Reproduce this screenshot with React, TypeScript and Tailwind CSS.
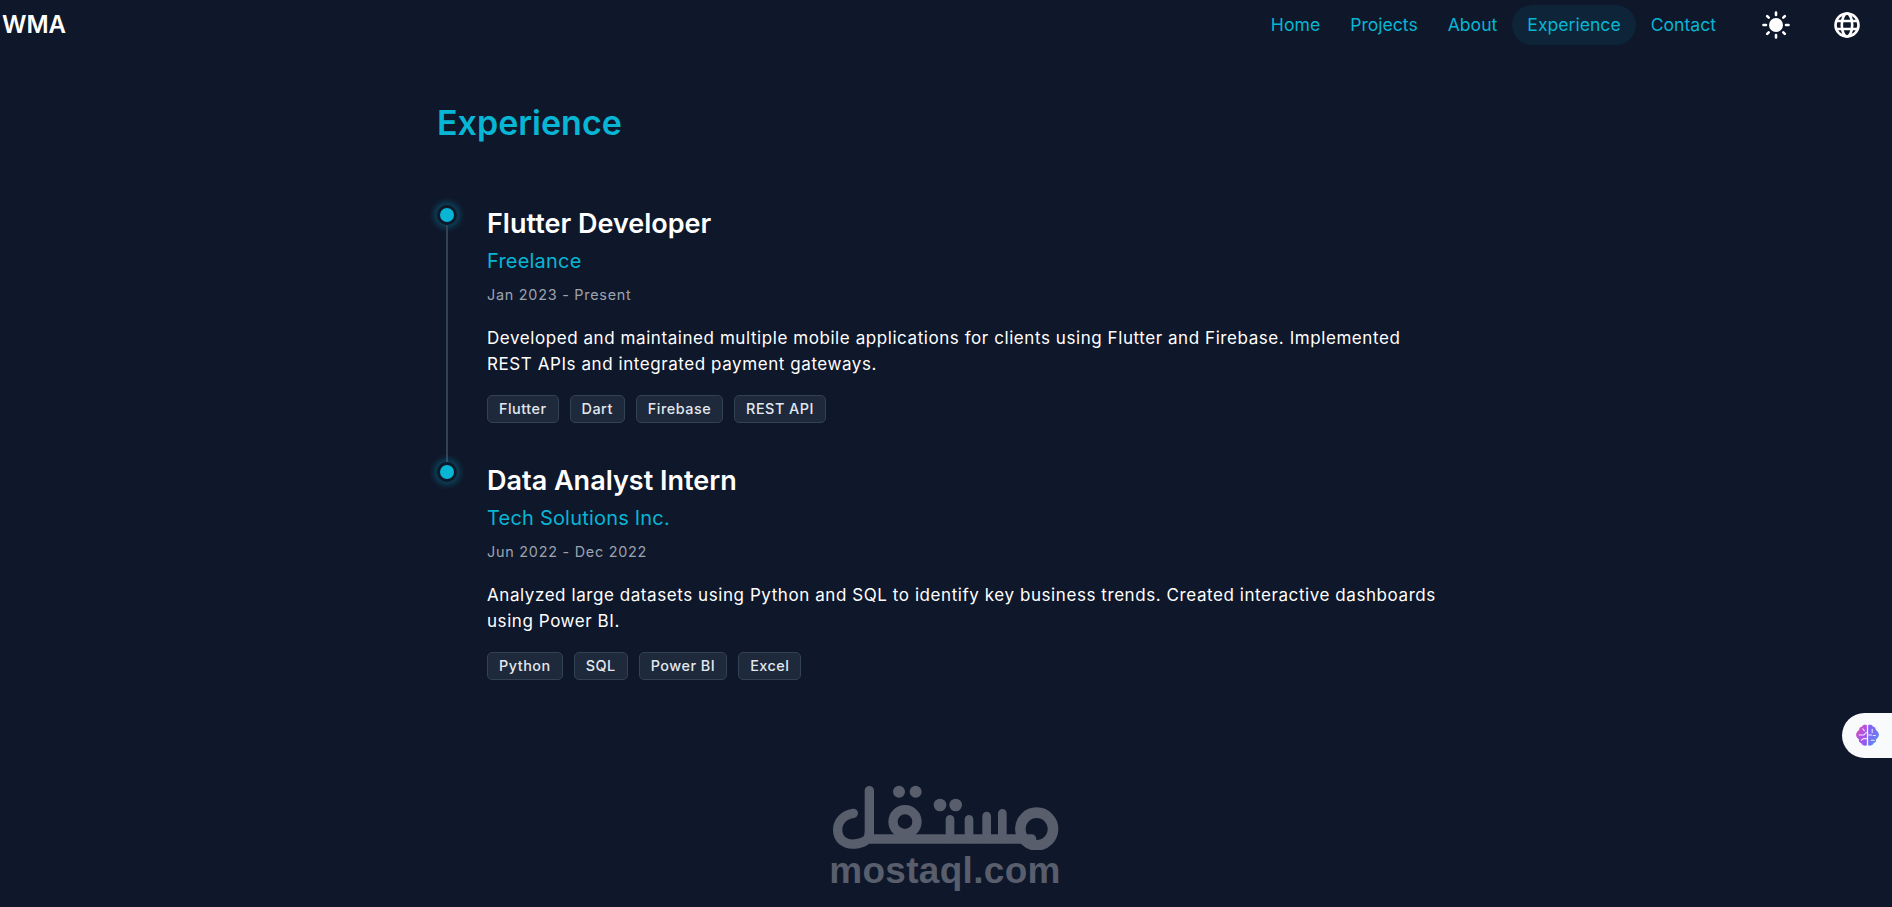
import React from "react";

const jobs = [
  {
    title: "Flutter Developer",
    company: "Freelance",
    date: "Jan 2023 - Present",
    desc: "Developed and maintained multiple mobile applications for clients using Flutter and Firebase. Implemented REST APIs and integrated payment gateways.",
    tags: ["Flutter", "Dart", "Firebase", "REST API"],
  },
  {
    title: "Data Analyst Intern",
    company: "Tech Solutions Inc.",
    date: "Jun 2022 - Dec 2022",
    desc: "Analyzed large datasets using Python and SQL to identify key business trends. Created interactive dashboards using Power BI.",
    tags: ["Python", "SQL", "Power BI", "Excel"],
  },
];

function Sun() {
  return (
    <svg width="30" height="30" viewBox="0 0 30 30" fill="none" stroke="white" strokeWidth="2.6" strokeLinecap="round">
      <circle cx="15" cy="15" r="7" fill="white" stroke="none" />
      <path d="M15 2.5v2.5M15 25v2.5M2.5 15H5M25 15h2.5M6.2 6.2l1.5 1.5M22.3 22.3l1.5 1.5M6.2 23.8l1.5-1.5M22.3 7.7l1.5-1.5" />
    </svg>
  );
}

function Globe() {
  return (
    <svg width="26" height="26" viewBox="0 0 26 26" fill="none" stroke="white" strokeWidth="2.6">
      <circle cx="13" cy="13" r="11.5" />
      <ellipse cx="13" cy="13" rx="5.2" ry="11.5" />
      <path d="M2 9h22M2 17h22" />
    </svg>
  );
}

function BrainIcon() {
  return (
    <svg width="25" height="25" viewBox="0 0 24 24">
      <defs>
        <linearGradient id="bl" x1="0" y1="0" x2="0.8" y2="1">
          <stop offset="0" stopColor="#f97316" />
          <stop offset="0.35" stopColor="#c04fd8" />
          <stop offset="1" stopColor="#8b5cf6" />
        </linearGradient>
        <linearGradient id="br" x1="0" y1="0" x2="0.8" y2="1">
          <stop offset="0" stopColor="#8b5cf6" />
          <stop offset="0.7" stopColor="#6d7bf0" />
          <stop offset="1" stopColor="#38bdf8" />
        </linearGradient>
      </defs>
      <path d="M11.4 2.2C9.8 1.4 7.5 1.7 6.6 3.6 5 3.7 3.8 5 4 6.8 2.4 7.6 1.2 9.4 1 11.6c.3 2 1.4 3.2 2.7 3.9-.2 2 .8 3.5 2.4 4 .6 1.7 3.4 3.1 5.3 1.9z" fill="url(#bl)" />
      <path d="M12.6 2.2c1.6-.8 3.9-.5 4.8 1.4 1.6.1 2.8 1.4 2.6 3.2 1.6.8 2.8 2.6 3 4.8-.3 2-1.4 3.2-2.7 3.9.2 2-.8 3.5-2.4 4-.6 1.7-3.4 3.1-5.3 1.9z" fill="url(#br)" />
      <path d="M4 11.5h4.5l2.5-2.5M6 16.5l2.5-1.5H11M7.5 5.5l1.5 2M16.5 6v3M13 11.5h3M19.5 12h-2M15.5 16.5h3" stroke="#f1e9fb" strokeWidth="1" fill="none" strokeLinecap="round" />
    </svg>
  );
}

function Mostaql() {
  return (
    <div className="absolute left-[825px] top-[780px] flex flex-col items-center w-[240px] text-[#585e6c]">
      <svg width="240" height="70" viewBox="0 0 720 210" fill="none" stroke="currentColor" strokeWidth="28" strokeLinecap="round" strokeLinejoin="round" aria-hidden="true">
        <path d="M85 100C55 105 38 125 38 150C38 178 60 195 90 192C115 190 133 180 133 160" />
        <path d="M133 32V177H620" />
        <circle cx="240" cy="125" r="36" />
        <g strokeWidth="26">
          <path d="M375 118V177M432 118V177M485 108V177M532 100V177" />
        </g>
        <circle cx="635" cy="147" r="49" strokeWidth="32" />
        <g fill="currentColor" stroke="none">
          <circle cx="222" cy="35" r="18" />
          <circle cx="272" cy="35" r="18" />
          <circle cx="345" cy="75" r="19" />
          <circle cx="392" cy="75" r="19" />
        </g>
      </svg>
      <span className="text-[37px] leading-[36px] font-bold font-['Liberation_Sans',sans-serif] tracking-[0.3px] mt-[3px]">mostaql.com</span>
    </div>
  );
}

function Job({ job, last }: { job: (typeof jobs)[number]; last: boolean }) {
  return (
    <div className="flex">
      <div className="w-[50px] shrink-0 flex flex-col items-start">
        <div className="w-[20px] h-[20px] mt-[-1px] rounded-full bg-[#06b6d4] border-[3px] border-[#0f172a] shadow-[0_0_6px_3px_rgba(6,182,212,0.3)] shrink-0" />
        {!last && <div className="w-[2px] flex-1 bg-[#334155] ml-[9px]" />}
      </div>
      <div className="pb-[40px] flex-1">
        <h3 className="text-[27px] leading-[36px] font-semibold text-white">{job.title}</h3>
        <p className="text-[20px] leading-[28px] text-[#06b6d4] mt-[5px] tracking-[0.2px]">{job.company}</p>
        <p className="text-[14.4px] leading-[20px] text-[#9ca3af] mt-[10px] tracking-[0.75px]">{job.date}</p>
        <p className="text-[17px] leading-[25.5px] text-white mt-[21px] tracking-[0.57px]">{job.desc}</p>
        <div className="flex gap-[11px] mt-[18px]">
          {job.tags.map((t) => (
            <span key={t} className="h-[28px] px-[11px] flex items-center rounded-[5px] border border-[#334155] bg-[#1e293b] text-[14.4px] font-medium text-[#e2e8f0] tracking-[0.5px]">
              {t}
            </span>
          ))}
        </div>
      </div>
    </div>
  );
}

export default function App() {
  const nav = ["Home", "Projects", "About", "Experience", "Contact"];
  return (
    <div className="relative h-[907px] overflow-hidden bg-[#0f172a] font-['Inter',sans-serif]">
      <header className="flex items-center h-[50px] pl-[2px] pr-[32px]">
        <span className="text-[24px] font-semibold text-white">WMA</span>
        <nav className="ml-auto flex items-center">
          {nav.map((n) => (
            <a key={n} className={"h-[40px] px-[15px] flex items-center rounded-full text-[17.6px] text-[#06b6d4] " + (n === "Experience" ? "bg-[#0e2438]" : "")}>
              {n}
            </a>
          ))}
        </nav>
        <div className="ml-[30px] mr-[43px] flex"><Sun /></div>
        <div className="flex"><Globe /></div>
      </header>
      <main className="w-[1003px] ml-[437px]">
        <h1 className="text-[34px] leading-[44px] font-semibold text-[#06b6d4] mt-[51px] mb-[61px]">Experience</h1>
        {jobs.map((j, i) => (
          <Job key={j.title} job={j} last={i === jobs.length - 1} />
        ))}
      </main>
      <button className="absolute right-0 top-[713px] w-[50px] h-[45px] rounded-l-full bg-[#f8fafc] flex items-center justify-center">
        <BrainIcon />
      </button>
      <Mostaql />
    </div>
  );
}
